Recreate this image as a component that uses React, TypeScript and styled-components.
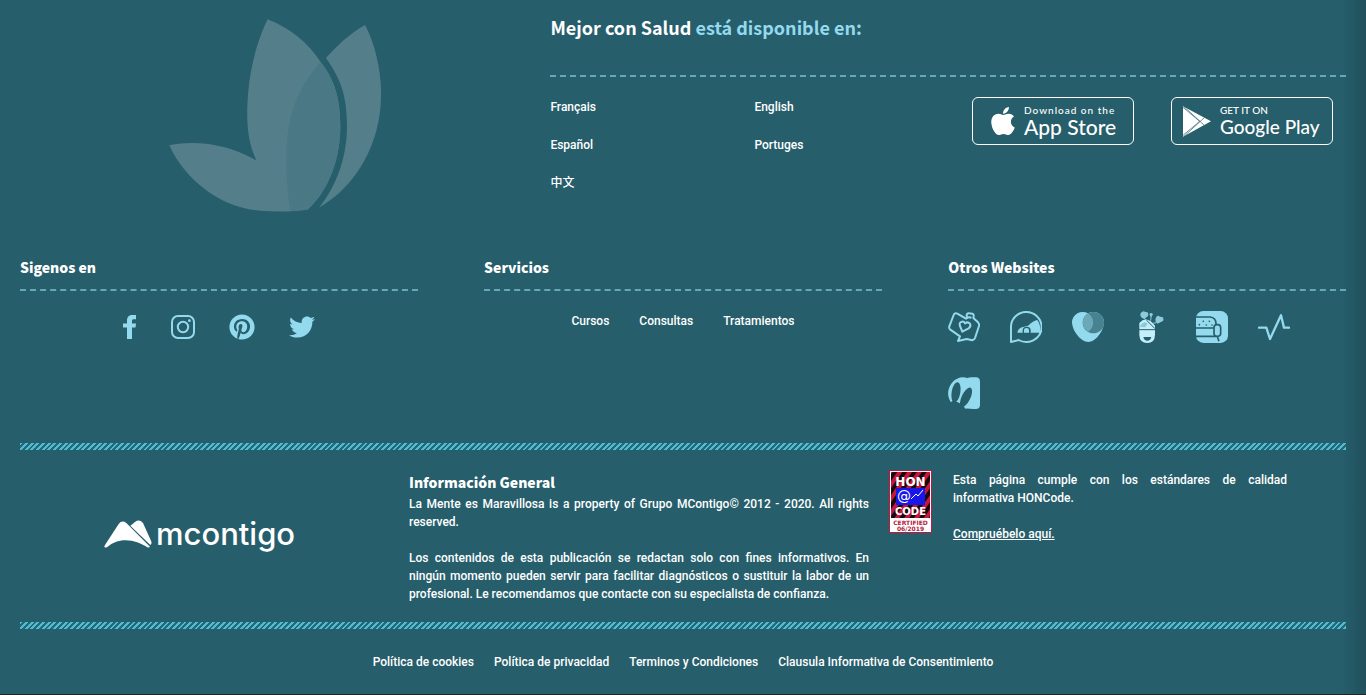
import React from 'react';
import styled, { createGlobalStyle } from 'styled-components';
import { FaApple, FaPinterest, FaTwitter } from 'react-icons/fa';

const white = '#ffffff';
const sky = '#94daee';
const teal = '#265e6b';
const headingFont = '"Source Sans Pro", "Noto Sans CJK JP", sans-serif';
const bodyFont = 'Roboto, "Noto Sans CJK SC", sans-serif';

const GlobalStyle = createGlobalStyle`
  *, *::before, *::after { box-sizing: border-box; }
  body { margin: 0; background: ${teal}; }
  h2, h3, p, ul { margin: 0; padding: 0; }
  ul { list-style: none; }
  a { color: inherit; text-decoration: none; }
  svg { display: block; }
`;

const Footer = styled.footer`
  min-height: 100vh;
  padding: 16px 20px;
  border-bottom: 1px solid #232329;
  background: linear-gradient(to left, #20505c 0, ${teal} 24px);
  color: ${white};
  font: 500 12px/18px ${bodyFont};
`;

const Top = styled.section`
  display: flex;
  height: 240px;
`;

const Emblem = styled.div`
  flex: 0 0 40%;
  display: flex;
  justify-content: center;
  padding: 3px 20px 0 0;
`;

const Availability = styled.div`
  flex: 1;
`;

const Title = styled.h2`
  height: 59px;
  font: 700 18px/22px ${headingFont};
  span { color: ${sky}; }
`;

const dashed = '2px dashed #66a8b8';

const Offers = styled.div`
  display: flex;
  justify-content: space-between;
  align-items: flex-start;
  padding: 20px 13px 0 0;
  border-top: ${dashed};
`;

const Languages = styled.ul`
  && { padding-top: 1px; }
  display: grid;
  grid-template-columns: 204px auto;
  row-gap: 20px;
`;

const Stores = styled.div`
  display: flex;
  gap: 37px;
`;

const StoreLink = styled.a<{ $inset: number; $gap: number }>`
  display: flex;
  align-items: center;
  gap: ${p => p.$gap}px;
  width: 162px;
  height: 48px;
  padding-left: ${p => p.$inset}px;
  border: 1px solid ${white};
  border-radius: 6px;
  white-space: nowrap;
`;

const StoreText = styled.span`
  display: flex;
  flex-direction: column;
  font-family: Lato, sans-serif;
`;

const StoreSmall = styled.small<{ $track?: number }>`
  font-size: 10px;
  line-height: 12px;
  letter-spacing: ${p => p.$track ?? 0}px;
`;

const StoreName = styled.span<{ $size: number }>`
  font-size: ${p => p.$size}px;
  line-height: 22px;
`;

const Columns = styled.section`
  display: flex;
  justify-content: space-between;
  height: 187px;
`;

const Column = styled.div`
  flex: 0 0 30%;
`;

const ColumnTitle = styled.h3`
  height: 35px;
  border-bottom: ${dashed};
  font: 900 14px/22px ${headingFont};
`;

const Socials = styled.div`
  display: flex;
  align-items: center;
  height: 32px;
  margin-top: 20px;
  padding-left: 103px;
  gap: 34px;
  color: ${sky};
`;

const Services = styled.ul`
  display: flex;
  justify-content: center;
  gap: 30px;
  && { margin-top: 21px; }
`;

const Sites = styled.div`
  display: flex;
  flex-wrap: wrap;
  gap: 34px 30px;
  margin-top: 20px;
`;

const Stripe = styled.div`
  height: 7px;
  background: repeating-linear-gradient(135deg, #56bace 0 2px, #1f6b7c 2px 4px);
`;

const Info = styled.section`
  display: flex;
  height: 172px;
  padding-top: 20px;
`;

const Brand = styled.div`
  flex: 0 0 389px;
  display: flex;
  align-items: flex-start;
  gap: 4px;
  padding: 50px 0 0 84px;
  font: 500 31px/28px Inter, sans-serif;
`;

const About = styled.div`
  flex: 0 0 460px;
  text-align: justify;
  h3 { margin-bottom: 1px; font: 900 14px/24px ${headingFont}; }
  p + p { margin-top: 18px; }
`;

const HonLink = styled.a`
  margin-left: 20px;
`;

const HonText = styled.div`
  flex: 0 1 334px;
  margin-left: 21px;
  padding-top: 1px;
  text-align: justify;
  a { display: inline-block; margin-top: 18px; text-decoration: underline; }
`;

const Phrase = styled.span`
  white-space: nowrap;
`;

const Legal = styled.nav`
  display: flex;
  justify-content: center;
  gap: 20px;
  padding-top: 24px;
`;

const Butterfly = () => (
  <svg width="212" height="193" viewBox="27 28 636 579" aria-hidden="true">
    <path fill="#547f8a" d="M323 29C390 55 445 100 482 157C520 205 541 260 541 350C541 450 505 545 443 600C400 606 350 607 300 603C180 595 75 510 28 407C110 390 210 405 290 453C262 400 258 330 264 255C270 170 295 85 323 29Z" />
    <path fill="#4a7884" d="M482 157C420 225 380 310 380 430C378 490 382 545 390 604L443 600C505 545 541 450 541 350C541 260 520 205 482 157Z" />
    <path fill="#547f8a" d="M498 145C530 110 570 70 615 46C650 110 665 200 663 260C662 400 590 530 477 594C530 530 561 440 561 350C561 255 540 205 498 145Z" />
  </svg>
);

const PlayIcon = () => (
  <svg width="28" height="31" viewBox="0 0 84 93">
    <path fill={white} d="M0 1L84 46L0 92Z" />
    <path stroke={teal} strokeWidth="2" fill="none" d="M3 2L64 58M3 91L64 35M0 4L50 46L0 88" />
  </svg>
);

const FacebookIcon = () => (
  <svg width="14" height="24" viewBox="0 0 14 24" fill="currentColor">
    <path d="M13 0H9.5C6 0 4 2 4 5.5V8.5H0V12.5H4V24H9V12.5H12.5L13 8.5H9V6C9 4.7 9.5 4.2 10.8 4.2H13Z" />
  </svg>
);

const InstagramIcon = () => (
  <svg width="24" height="24" viewBox="0 0 24 24" fill="none" stroke="currentColor" strokeWidth="2">
    <rect x="1" y="1" width="22" height="22" rx="6" />
    <circle cx="12" cy="12" r="5.2" />
    <circle cx="18.4" cy="5.7" r="1.4" fill="currentColor" stroke="none" />
  </svg>
);

const SiteSvg = ({ children }: { children: React.ReactNode }) => (
  <svg width="32" height="32" viewBox="0 0 96 96" fill="none" strokeLinecap="round" strokeLinejoin="round">
    {children}
  </svg>
);

const sites = [
  {
    name: 'Mascotas',
    art: (
      <g stroke={sky} strokeWidth="6">
        <path d="M57 18C54 10 58 6 64 7L73 8C78 9 78 14 76 21L90 34Q94 38 93 45L81 81Q78 89 70 87L56 84L30 90L36 76L7 56Q2 52 4 46L17 12Q20 4 28 8L54 23Q64 17 68 20" />
        <path d="M43 62L36 45Q32 34 42 32Q48 31 51 37Q59 31 66 38Q70 46 62 52Z" />
      </g>
    ),
  },
  {
    name: 'Viajes',
    art: (
      <g>
        <path stroke={sky} strokeWidth="6" d="M3 93V50A46 45 0 1 1 49 93Q36 93 26 87Z" />
        <path fill={sky} d="M22 65Q24 53 36 49L54 44Q72 28 82 27Q89 36 91 49V65Z" />
        <path fill={teal} d="M38 67V58Q38 47 50 47Q62 47 62 58V67Z" />
        <path fill={sky} d="M42 65V58Q42 51 50 51Q57 51 57 58V65Z" />
      </g>
    ),
  },
  {
    name: 'Pareja',
    art: (
      <g>
        <path fill={sky} d="M0 34A32 32 0 0 1 48 7A32 32 0 0 1 96 34C95 62 70 93 49 93C28 93 1 62 0 34Z" />
        <circle cx="64" cy="35" r="32" fill="#48818f" />
        <path fill="#6ba9b8" d="M48 7A32 32 0 0 1 48 62A32 32 0 0 1 48 7Z" />
      </g>
    ),
  },
  {
    name: 'Nutrición',
    art: (
      <g>
        <path fill="#c5effa" d="M16 36Q38 12 63 44V72Q62 96 40 96Q17 96 16 72Z" />
        <path stroke={teal} strokeWidth="3" d="M15 56H64M34 24L62 52" />
        <path fill={teal} d="M28 78H52Q50 89 40 89Q30 89 28 78Z" />
        <path fill="#8ccbdb" d="M19 8Q26-4 34 3Q46 1 42 15L31 24Q18 20 19 8ZM46 10Q51 2 57 10L51 21ZM65 22Q69 10 78 17Q92 16 87 30L70 38Q62 32 65 22ZM20 42Q30 28 41 38L34 49L18 48Z" />
        <path stroke="#8ccbdb" strokeWidth="3" d="M31 23L39 28M51 20L50 28M66 35L57 37" />
      </g>
    ),
  },
  {
    name: 'Recetas',
    art: (
      <g>
        <rect width="96" height="96" rx="22" fill={sky} />
        <path stroke={teal} strokeWidth="5" strokeLinecap="butt" d="M0 18H42Q60 20 60 38V45M0 51H53M0 76H60M64 77L69 91" />
        <rect x="54" y="41" width="20" height="35" rx="9" fill={sky} stroke={teal} strokeWidth="5" />
        <g fill={teal}>
          <circle cx="22" cy="31" r="2.5" /><circle cx="40" cy="31" r="2.5" /><circle cx="10" cy="41" r="2.5" />
          <circle cx="31" cy="42" r="2.5" /><circle cx="48" cy="42" r="2.5" />
        </g>
      </g>
    ),
  },
  {
    name: 'Fitness',
    art: <path stroke={sky} strokeWidth="7" d="M3 50H25L36 84L69 13L78 50H93" />,
  },
  {
    name: 'Muy Salud',
    art: (
      <g>
        <path fill={sky} d="M9 76C-3 60-3 35 12 17C24 2 44-3 57 3Q64 2 71 1H83Q96 1 96 14V83Q96 96 83 96H76Q60 94 52 95L46 86L34 78L28 75L16 70Z" />
        <ellipse cx="24" cy="46" rx="13" ry="31" fill={teal} transform="rotate(10 24 46)" />
        <ellipse cx="54" cy="61" rx="13" ry="32" fill={teal} transform="rotate(26 54 61)" />
      </g>
    ),
  },
];

const Mountains = () => (
  <svg width="48" height="28" viewBox="0 0 144 84" fill={white}>
    <path d="M3 75L44 12Q54-1 67 9L135 77Q142 83 130 82C110 70 90 61 65 61C42 61 26 68 10 81Q-3 86 3 75Z" />
    <path d="M79 17L94 5Q106-3 117 9L141 62Q145 70 139 75Z" />
  </svg>
);

const HonBadge = () => (
  <svg width="43" height="63" viewBox="0 0 43 63" role="img" aria-label="HON Code">
    <defs>
      <pattern id="hon" width="8" height="8" patternUnits="userSpaceOnUse" patternTransform="rotate(35)">
        <rect width="8" height="8" fill="#180a10" />
        <rect width="4" height="8" fill="#c3173b" />
      </pattern>
    </defs>
    <rect x="0.5" y="0.5" width="42" height="62" fill="#fff" stroke="#c3173b" />
    <rect x="2" y="2" width="39" height="46" fill="url(#hon)" />
    <rect x="7" y="18" width="29" height="17" fill="#1717ea" />
    <g fill="#fff" textAnchor="middle" fontFamily="DejaVu Sans" fontWeight="700">
      <text x="21.5" y="16" fontSize="12">HON</text>
      <text x="21.5" y="45" fontSize="10">CODE</text>
      <text x="15" y="31" fontSize="14" fontWeight="400">@</text>
    </g>
    <path d="M22 29L27 24L29 26L34 20" stroke="#fff" fill="none" />
    <g fill="#b5203d" textAnchor="middle" fontFamily="DejaVu Sans" fontWeight="700" fontSize="6">
      <text x="21.5" y="55">CERTIFIED</text>
      <text x="21.5" y="61">06/2019</text>
    </g>
  </svg>
);

const languages = ['Français', 'English', 'Español', 'Portuges', '中文'];
const services = ['Cursos', 'Consultas', 'Tratamientos'];
const legal = ['Política de cookies', 'Política de privacidad', 'Terminos y Condiciones', 'Clausula Informativa de Consentimiento'];

export default function App() {
  return (
    <>
      <GlobalStyle />
      <Footer>
        <Top>
          <Emblem><Butterfly /></Emblem>
          <Availability>
            <Title>Mejor con Salud <span>está disponible en:</span></Title>
            <Offers>
              <Languages>
                {languages.map(l => <li key={l}><a href="#">{l}</a></li>)}
              </Languages>
              <Stores>
                <StoreLink href="#" $inset={14} $gap={5}>
                  <FaApple size={32} />
                  <StoreText>
                    <StoreSmall $track={1}>Download on the</StoreSmall>
                    <StoreName $size={21}>App Store</StoreName>
                  </StoreText>
                </StoreLink>
                <StoreLink href="#" $inset={11} $gap={9}>
                  <PlayIcon />
                  <StoreText>
                    <StoreSmall>GET IT ON</StoreSmall>
                    <StoreName $size={19}>Google Play</StoreName>
                  </StoreText>
                </StoreLink>
              </Stores>
            </Offers>
          </Availability>
        </Top>

        <Columns>
          <Column>
            <ColumnTitle>Sigenos en</ColumnTitle>
            <Socials>
              <a href="#" aria-label="Facebook"><FacebookIcon /></a>
              <a href="#" aria-label="Instagram"><InstagramIcon /></a>
              <a href="#" aria-label="Pinterest"><FaPinterest size={26} /></a>
              <a href="#" aria-label="Twitter"><FaTwitter size={26} /></a>
            </Socials>
          </Column>
          <Column>
            <ColumnTitle>Servicios</ColumnTitle>
            <Services>
              {services.map(s => <li key={s}><a href="#">{s}</a></li>)}
            </Services>
          </Column>
          <Column>
            <ColumnTitle>Otros Websites</ColumnTitle>
            <Sites>
              {sites.map(s => <a key={s.name} href="#" aria-label={s.name}><SiteSvg>{s.art}</SiteSvg></a>)}
            </Sites>
          </Column>
        </Columns>

        <Stripe />
        <Info>
          <Brand><Mountains /><span>mcontigo</span></Brand>
          <About>
            <h3>Información General</h3>
            <p>La Mente es Maravillosa is a property of Grupo MContigo© 2012 - 2020. All rights reserved.</p>
            <p>Los contenidos de esta publicación se redactan solo con fines informativos. En ningún momento pueden servir para facilitar diagnósticos o sustituir la labor de un profesional. Le recomendamos que contacte con su especialista de confianza.</p>
          </About>
          <HonLink href="#"><HonBadge /></HonLink>
          <HonText>
            <p>Esta página cumple con los estándares de calidad <Phrase>informativa HONCode.</Phrase></p>
            <a href="#">Compruébelo aquí.</a>
          </HonText>
        </Info>
        <Stripe />

        <Legal>
          {legal.map(l => <a key={l} href="#">{l}</a>)}
        </Legal>
      </Footer>
    </>
  );
}
